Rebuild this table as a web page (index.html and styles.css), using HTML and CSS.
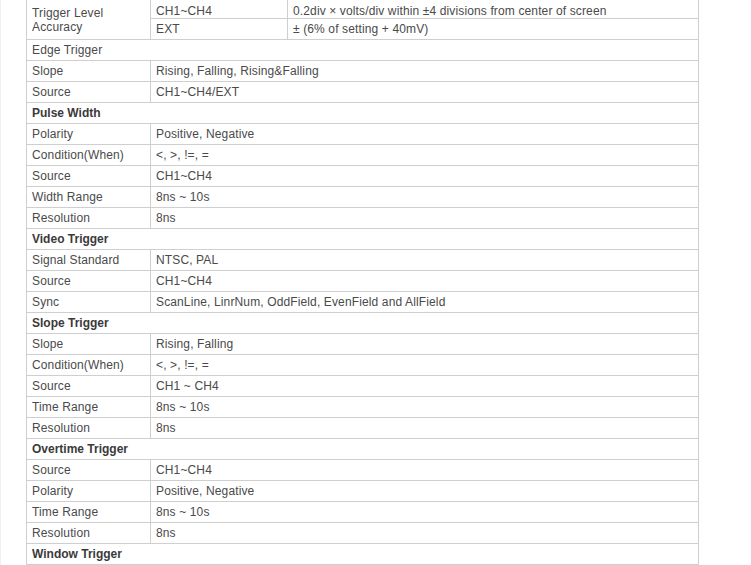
FILE: index.html
```html
<!DOCTYPE html>
<html>
<head>
<meta charset="utf-8">
<link rel="stylesheet" href="styles.css">
</head>
<body>
<div class="page">
<table class="spec">
<colgroup><col class="c1"><col class="c2"><col class="c3"></colgroup>
<tbody>
<tr class="first"><td rowspan="2" class="span">Trigger Level<br>Accuracy</td><td>CH1~CH4</td><td>0.2div × volts/div within ±4 divisions from center of screen</td></tr>
<tr><td>EXT</td><td>± (6% of setting + 40mV)</td></tr>
<tr><td colspan="3">Edge Trigger</td></tr>
<tr><td>Slope</td><td colspan="2">Rising, Falling, Rising&amp;Falling</td></tr>
<tr><td>Source</td><td colspan="2">CH1~CH4/EXT</td></tr>
<tr><td colspan="3" class="h">Pulse Width</td></tr>
<tr><td>Polarity</td><td colspan="2">Positive, Negative</td></tr>
<tr><td>Condition(When)</td><td colspan="2">&lt;, &gt;, !=, =</td></tr>
<tr><td>Source</td><td colspan="2">CH1~CH4</td></tr>
<tr><td>Width Range</td><td colspan="2">8ns ~ 10s</td></tr>
<tr><td>Resolution</td><td colspan="2">8ns</td></tr>
<tr><td colspan="3" class="h">Video Trigger</td></tr>
<tr><td>Signal Standard</td><td colspan="2">NTSC, PAL</td></tr>
<tr><td>Source</td><td colspan="2">CH1~CH4</td></tr>
<tr><td>Sync</td><td colspan="2">ScanLine, LinrNum, OddField, EvenField and AllField</td></tr>
<tr><td colspan="3" class="h">Slope Trigger</td></tr>
<tr><td>Slope</td><td colspan="2">Rising, Falling</td></tr>
<tr><td>Condition(When)</td><td colspan="2">&lt;, &gt;, !=, =</td></tr>
<tr><td>Source</td><td colspan="2">CH1 ~ CH4</td></tr>
<tr><td>Time Range</td><td colspan="2">8ns ~ 10s</td></tr>
<tr><td>Resolution</td><td colspan="2">8ns</td></tr>
<tr><td colspan="3" class="h">Overtime Trigger</td></tr>
<tr><td>Source</td><td colspan="2">CH1~CH4</td></tr>
<tr><td>Polarity</td><td colspan="2">Positive, Negative</td></tr>
<tr><td>Time Range</td><td colspan="2">8ns ~ 10s</td></tr>
<tr><td>Resolution</td><td colspan="2">8ns</td></tr>
<tr><td colspan="3" class="h">Window Trigger</td></tr>
</tbody>
</table>
</div>
</body>
</html>
```
FILE: styles.css
```css
html, body {
  margin: 0;
  padding: 0;
  background: #fff;
  overflow: hidden;
}
.page {
  width: 749px;
  height: 565px;
  border-left: 1px solid #f0f0f0;
  border-right: 1px solid #c8c8c8;
  padding-left: 25px;
  box-sizing: content-box;
  overflow: hidden;
}
.spec {
  border-collapse: collapse;
  width: 673px;
  margin-top: -3px;
  font-family: "Liberation Sans", Arial, sans-serif;
  font-size: 12px;
  color: #4a4a4a;
  letter-spacing: 0.13px;
  table-layout: fixed;
}
.c1 { width: 124px; }
.c2 { width: 137px; }
.spec td {
  border: 1px solid #cfcfcf;
  height: 20px;
  padding: 0 5px;
  line-height: 14px;
  vertical-align: middle;
}
.spec .first td {
  vertical-align: bottom;
}
.spec td.span {
  vertical-align: middle;
  padding-top: 2px;
  line-height: 14px;
}
.spec td.h {
  font-weight: bold;
  color: #3a3a3a;
  letter-spacing: 0;
}
```
